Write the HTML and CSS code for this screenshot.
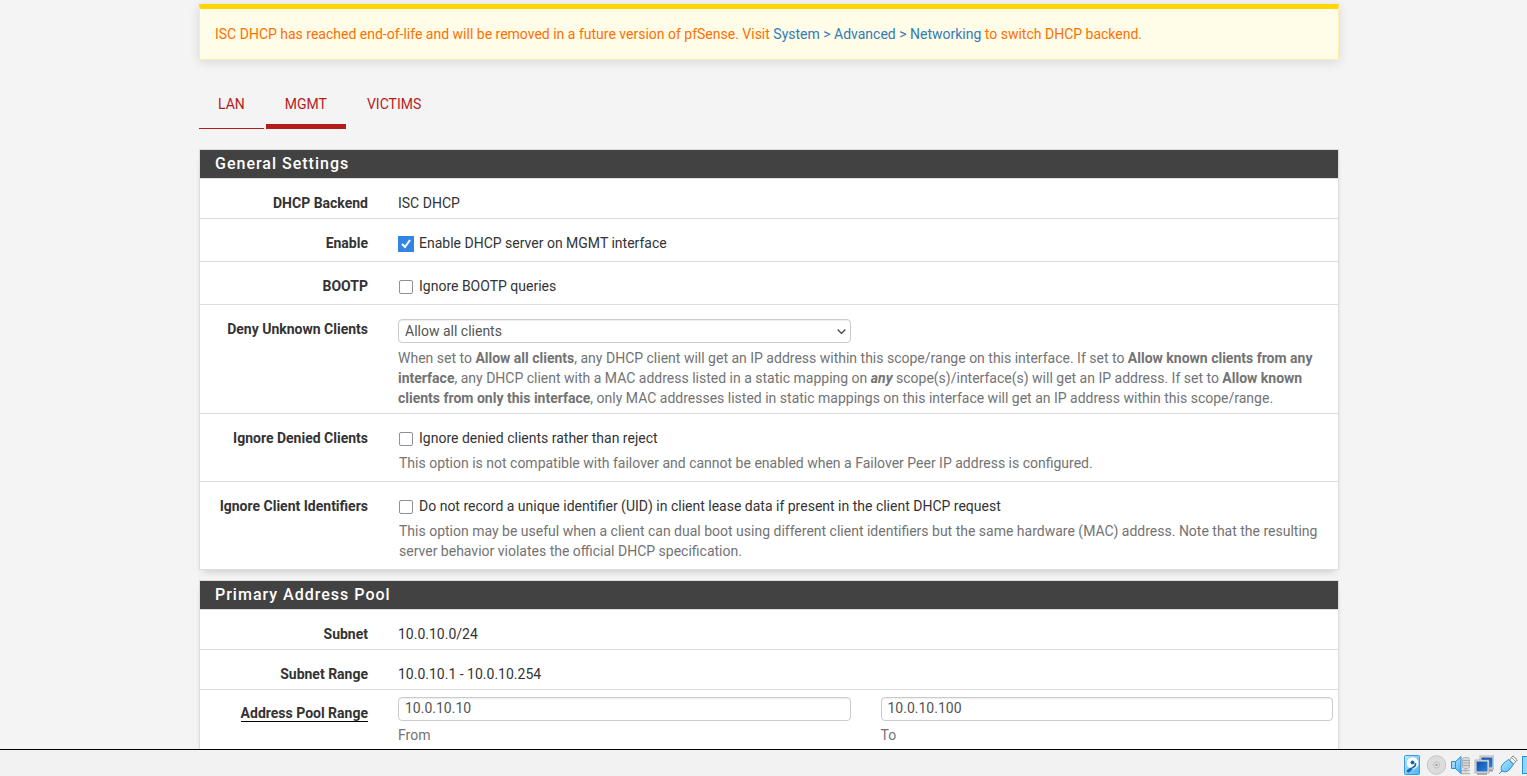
FILE: index.html
```html
<!DOCTYPE html>
<html lang="en">
<head>
    <meta charset="UTF-8">
    <meta name="viewport" content="width=device-width, initial-scale=1.0">
    <title>Services: DHCP Server: MGMT</title>
    <link rel="stylesheet" href="styles.css">
</head>
<body>

<main class="viewport">
    <div class="container">
        <div class="alert">
            ISC DHCP has reached end-of-life and will be removed in a future version of pfSense. Visit
            <a href="#">System &gt; Advanced &gt; Networking</a> to switch DHCP backend.
        </div>

        <nav class="tabs">
            <a href="#" class="tab visited">LAN</a>
            <a href="#" class="tab active">MGMT</a>
            <a href="#" class="tab">VICTIMS</a>
        </nav>

        <form>
            <section class="panel">
                <h2 class="panel-title">General Settings</h2>
                <div class="panel-body">
                    <div class="form-group">
                        <span class="label">DHCP Backend</span>
                        <div class="field">ISC DHCP</div>
                    </div>
                    <div class="form-group check">
                        <span class="label">Enable</span>
                        <div class="field">
                            <label class="chkbox"><input type="checkbox" class="focused" checked>Enable DHCP server on MGMT interface</label>
                        </div>
                    </div>
                    <div class="form-group check">
                        <span class="label">BOOTP</span>
                        <div class="field">
                            <label class="chkbox"><input type="checkbox">Ignore BOOTP queries</label>
                        </div>
                    </div>
                    <div class="form-group">
                        <label class="label" for="denyunknown">Deny Unknown Clients</label>
                        <div class="field">
                            <div class="select-wrap">
                                <select class="form-control" id="denyunknown">
                                    <option>Allow all clients</option>
                                    <option>Allow known clients from any interface</option>
                                    <option>Allow known clients from only this interface</option>
                                </select>
                                <svg class="arrow" viewBox="0 0 10 10"><path d="M1.5 3.2 L5 6.7 L8.5 3.2" fill="none" stroke="#444" stroke-width="1.2"/></svg>
                            </div>
                            <p class="help">When set to <b>Allow all clients</b>, any DHCP client will get an IP address within this scope/range on this interface. If set to <b>Allow known clients from any interface</b>, any DHCP client with a MAC address listed in a static mapping on <b><i>any</i></b> scope(s)/interface(s) will get an IP address. If set to <b>Allow known clients from only this interface</b>, only MAC addresses listed in static mappings on this interface will get an IP address within this scope/range.</p>
                        </div>
                    </div>
                    <div class="form-group check">
                        <span class="label">Ignore Denied Clients</span>
                        <div class="field">
                            <label class="chkbox"><input type="checkbox">Ignore denied clients rather than reject</label>
                            <p class="help">This option is not compatible with failover and cannot be enabled when a Failover Peer IP address is configured.</p>
                        </div>
                    </div>
                    <div class="form-group check">
                        <span class="label">Ignore Client Identifiers</span>
                        <div class="field">
                            <label class="chkbox"><input type="checkbox">Do not record a unique identifier (UID) in client lease data if present in the client DHCP request</label>
                            <p class="help">This option may be useful when a client can dual boot using different client identifiers but the same hardware (MAC) address. Note that the resulting server behavior violates the official DHCP specification.</p>
                        </div>
                    </div>
                </div>
            </section>

            <section class="panel">
                <h2 class="panel-title">Primary Address Pool</h2>
                <div class="panel-body">
                    <div class="form-group">
                        <span class="label">Subnet</span>
                        <div class="field">10.0.10.0/24</div>
                    </div>
                    <div class="form-group">
                        <span class="label">Subnet Range</span>
                        <div class="field">10.0.10.1 - 10.0.10.254</div>
                    </div>
                    <div class="form-group inputs">
                        <span class="label"><span class="required">Address Pool Range</span></span>
                        <div class="field half">
                            <input type="text" class="form-control" id="range_from" value="10.0.10.10">
                            <label class="help" for="range_from">From</label>
                        </div>
                        <div class="field half">
                            <input type="text" class="form-control" id="range_to" value="10.0.10.100">
                            <label class="help" for="range_to">To</label>
                        </div>
                    </div>
                </div>
            </section>
        </form>
    </div>
</main>

<!-- VM window status bar -->
<footer class="statusbar">
    <svg width="0" height="0" class="defs">
        <linearGradient id="blue" x1="0" y1="0" x2="1" y2="1">
            <stop offset="0" stop-color="#c4eaff"/>
            <stop offset="1" stop-color="#45b4f5"/>
        </linearGradient>
        <linearGradient id="screen" x1="0" y1="0" x2="1" y2="1">
            <stop offset="0" stop-color="#0f4fa6"/>
            <stop offset="1" stop-color="#2f80d8"/>
        </linearGradient>
    </svg>
    <!-- hard disk -->
    <svg viewBox="0 0 20 20">
        <rect x="2.5" y=".5" width="15" height="19" rx="1" fill="url(#blue)" stroke="#3a9be0"/>
        <circle cx="10.5" cy="8" r="6.3" fill="#fff" stroke="#8fd0f8"/>
        <circle cx="10.5" cy="7.5" r="2" fill="#1c66b0"/>
        <path d="M13.5 8 Q14 11.5 10.5 12.5 L7 16.5" fill="none" stroke="#1c66b0" stroke-width="1.6"/>
        <path d="M8.5 12.5 L4.5 15.5 Q4.5 17.8 7 17.5 L10 14.5z" fill="#1c66b0"/>
    </svg>
    <!-- optical disc -->
    <svg viewBox="0 0 20 20">
        <circle cx="10.5" cy="10" r="9.3" fill="#dcdcdc" stroke="#c6c6c6"/>
        <circle cx="10.5" cy="10" r="3" fill="#e8e8e8" stroke="#bdbdbd"/>
        <circle cx="10.5" cy="10" r="1.2" fill="#999"/>
    </svg>
    <!-- audio -->
    <svg viewBox="0 0 20 20">
        <rect x="12.5" y="2.5" width="7" height="11" rx="2" fill="#d8d8d8" stroke="#b4b4b4"/>
        <path d="M13 5.5h6M13 8h6M13 10.5h6" stroke="#aaa"/>
        <path d="M10 15.5h10M15.5 13v4M11 18.5h9" stroke="#b4b4b4" stroke-width="1.5"/>
        <path d="M1.5 6.5h4l5.5-5v17l-5.5-5h-4z" fill="url(#blue)" stroke="#2b8fd6"/>
        <path d="M5.5 6.5v7" stroke="#2b8fd6"/>
    </svg>
    <!-- network -->
    <svg viewBox="0 0 20 20">
        <path d="M8 15.5h11" stroke="#999" stroke-width="2"/>
        <rect x="6" y="1" width="14" height="13" fill="#e6e6e6" stroke="#999" stroke-width=".7"/>
        <rect x="7.5" y="2.5" width="11" height="10" fill="url(#screen)"/>
        <rect x="1" y="5" width="14" height="13" fill="#e6e6e6" stroke="#999" stroke-width=".7"/>
        <rect x="2.5" y="6.5" width="11" height="10" fill="url(#screen)"/>
        <path d="M3 19h10" stroke="#999" stroke-width="1.5"/>
    </svg>
    <!-- usb -->
    <svg viewBox="0 0 20 20">
        <path d="M11.5 5 L15 .8 L19.3 5 L15.5 9z" fill="#f2f2f2" stroke="#888"/>
        <path d="M14.5 3.5l1 1M16.5 5.5l1 1" stroke="#555"/>
        <path d="M1 19 L4 16 Q1.5 12 6 8 L10.5 4.5 L15.5 9.5 L12 14 Q8 18.5 4 16z" fill="url(#blue)" stroke="#2b8fd6"/>
    </svg>
    <!-- shared folder -->
    <svg viewBox="0 0 20 20">
        <rect x=".5" y="1.5" width="18" height="17" fill="#8fd6fb" stroke="#2b8fd6"/>
    </svg>
</footer>

</body>
</html>
```
FILE: styles.css
```css
* {
    box-sizing: border-box;
}
body {
    margin: 0;
    height: 100vh;
    display: flex;
    flex-direction: column;
    overflow: hidden;
    background-color: #f4f4f4;
    color: #333;
    font-family: Roboto, "Liberation Sans", sans-serif;
    font-size: 14px;
    line-height: 20px;
}
a {
    color: #337ab7;
    text-decoration: none;
}
.viewport {
    flex: 1;
    min-height: 0;
    overflow: hidden;
    padding: 4px 0 0 11px;
}
.container {
    max-width: 1140px;
    margin: 0 auto;
}
.alert {
    padding: 15px;
    border: 1px solid #ffecb3;
    border-top: 5px solid #ffd600;
    background-color: #fffde7;
    color: #ff6f00;
    box-shadow: 0 2px 10px rgba(0, 0, 0, 0.12);
}

/* Tabs */
.tabs {
    display: flex;
    gap: 2px;
    margin: 24px 0 20px;
}
.tab {
    height: 45px;
    padding: 10px 19px;
    color: #b71c1c;
}
.tab.visited {
    border-bottom: 1px solid #b71c1c;
}
.tab.active {
    border-bottom: 5px solid #b71c1c;
}

/* Panels */
.panel {
    margin-bottom: 10px;
    border: 1px solid #ddd;
    background-color: #fff;
    box-shadow: 0 5px 8px -4px rgba(0, 0, 0, 0.2);
}
.panel-title {
    margin: 0;
    padding: 4px 15px;
    border-bottom: 1px solid #ddd;
    background-color: #424242;
    background-clip: padding-box;
    color: #fff;
    font-size: 16px;
    font-weight: 500;
    letter-spacing: 1px;
}
.panel-body {
    overflow: hidden;
}
.form-group {
    display: flex;
    margin: 0 -10px;
    padding: 14px 0 5px;
    border-bottom: 1px solid #ddd;
}
.form-group:last-child {
    border-bottom: none;
}
.form-group.check {
    padding-bottom: 8px;
}
.label {
    width: 16.6667%;
    padding: 0 15px;
    font-weight: 700;
    text-align: right;
}
.field {
    width: 83.3333%;
    padding: 0 15px;
}
.field.half {
    width: 41.6667%;
}
.inputs {
    padding-top: 7px;
}
.inputs .label {
    padding-top: 6px;
}
.required {
    display: inline-block;
    line-height: 16px;
    border-bottom: 1px solid #000;
}

/* Form controls */
.form-control {
    display: block;
    width: 100%;
    height: 24px;
    padding: 0 6px 2px;
    border: 1px solid #ccc;
    border-radius: 4px;
    background-color: #fff;
    box-shadow: inset 0 1px 1px rgba(0, 0, 0, 0.075);
    color: #555;
    font: inherit;
    appearance: none;
}
select.form-control {
    padding-bottom: 0;
}
.select-wrap {
    position: relative;
    width: calc(50% - 14px);
}
.arrow {
    position: absolute;
    top: 7px;
    right: 4px;
    width: 11px;
    height: 11px;
    pointer-events: none;
}
.chkbox {
    display: flex;
    align-items: center;
    gap: 6px;
    padding-left: 1px;
}
.chkbox input {
    appearance: none;
    width: 14px;
    height: 14px;
    margin: 2px 0 0;
    border: 1px solid #8f8f9d;
    border-radius: 2px;
    background-color: #fff;
}
.chkbox input:checked {
    border-color: #3584e4;
    background: #3584e4 url("data:image/svg+xml,%3Csvg xmlns='http://www.w3.org/2000/svg' viewBox='0 0 12 12'%3E%3Cpath d='M2 6 L5 9 L10 2' fill='none' stroke='white' stroke-width='2'/%3E%3C/svg%3E");
}
.chkbox .focused {
    border-radius: 0;
    outline: 1px solid #3584e4;
}
.help {
    display: block;
    margin: 5px 0 0;
    color: #737373;
}
.check .help {
    padding-left: 1px;
}
.inputs .help {
    margin-top: 4px;
}

/* Status bar */
.statusbar {
    display: flex;
    flex: none;
    justify-content: flex-end;
    gap: 4px;
    height: 27px;
    margin-right: -15px;
    padding-top: 5px;
    border-top: 1px solid #000;
    background-color: #f2f2f2;
}
.statusbar svg {
    flex: none;
    width: 20px;
    height: 20px;
}
.statusbar .defs {
    width: 0;
    height: 0;
}
```
